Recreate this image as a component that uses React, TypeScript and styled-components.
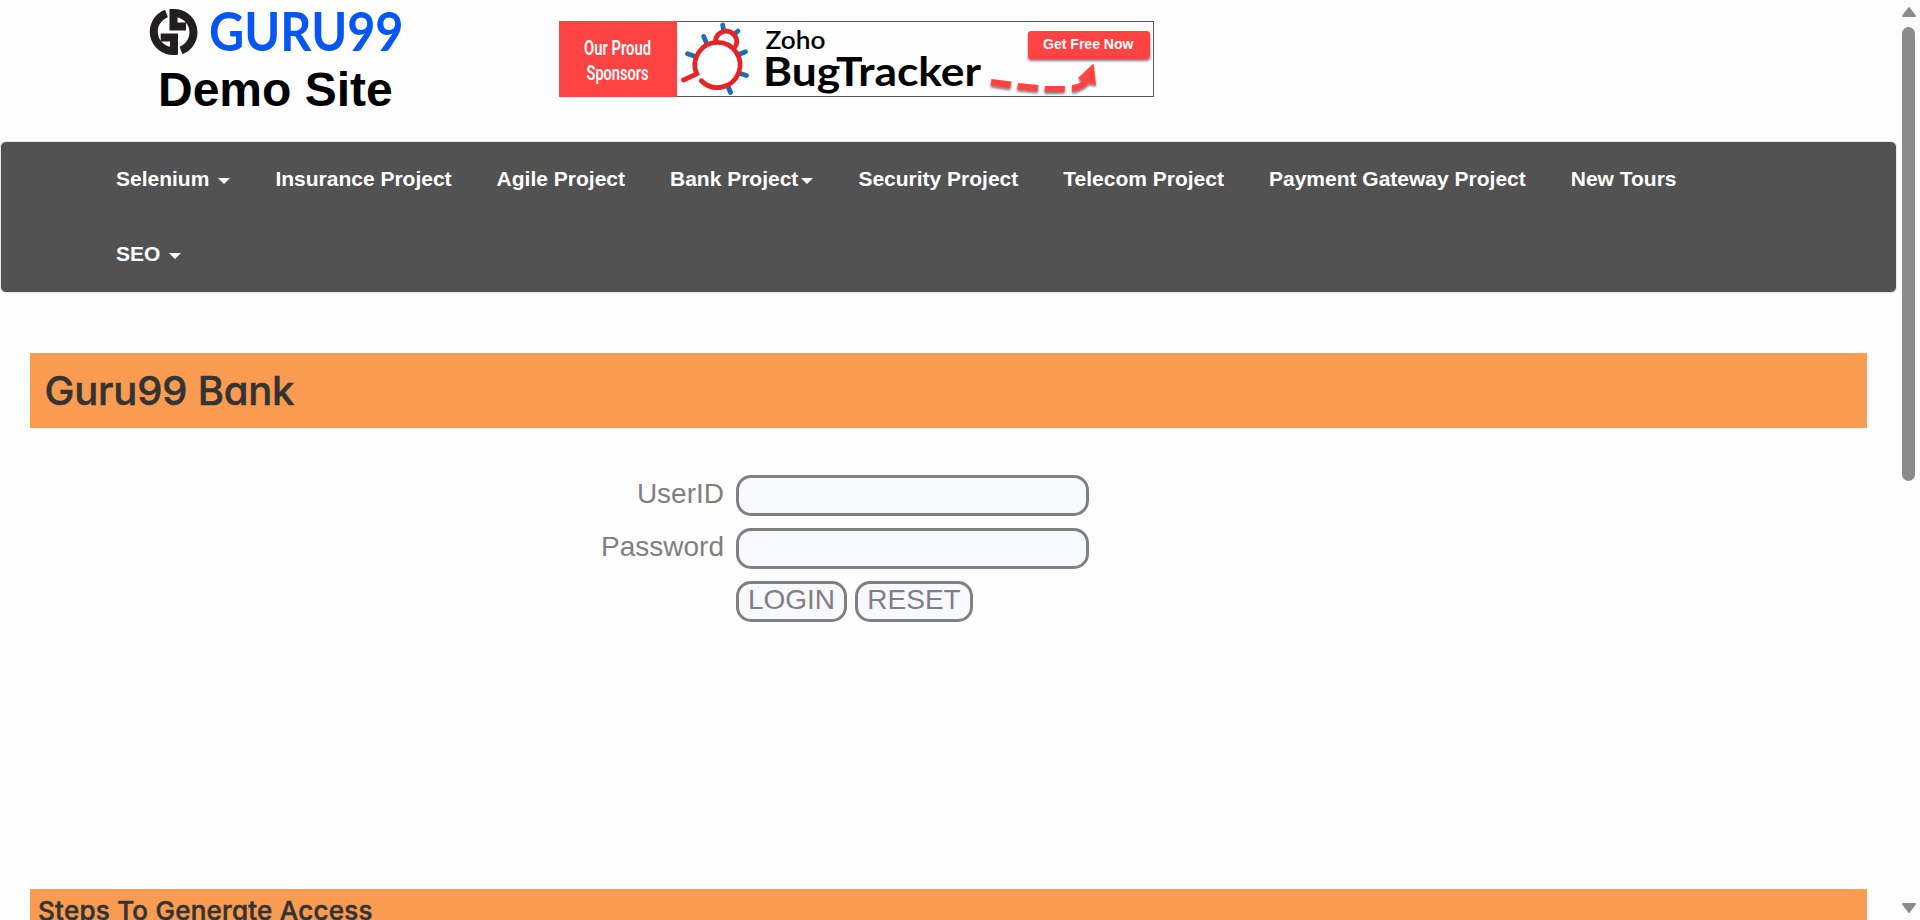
import React from "react";
import styled, { createGlobalStyle } from "styled-components";

const GlobalStyle = createGlobalStyle`
  * { box-sizing: border-box; }
  html, body { margin: 0; background: #fefefe; overflow: hidden; }
  body { font-family: "Liberation Sans", Arial, sans-serif; }
`;

const Screen = styled.div`
  display: flex;
  height: 920px;
  overflow: hidden;
`;

const Page = styled.div`
  flex: 1;
  min-width: 0;
`;

const Header = styled.header`
  display: flex;
  height: 141px;
`;

const Brand = styled.div`
  width: 559px;
  padding-left: 146px;
`;

const BrandName = styled.h1`
  margin: 0 0 0 12px;
  color: #000;
  font-size: 48px;
  line-height: 54px;
  font-weight: 700;
`;

const Drawing = styled.svg`
  display: block;
`;

const Banner = styled.a`
  display: flex;
  width: 595px;
  height: 76px;
  margin-top: 21px;
  background: #fefefe;
`;

const Nav = styled.nav`
  height: 152px;
  border: 1px solid #e7e7e7;
  border-radius: 6px;
  background: #525252;
  padding: 0 92.5px;
`;

const NavList = styled.ul`
  display: flex;
  flex-wrap: wrap;
  width: 1680px;
  margin: 0;
  padding: 0;
  list-style: none;
`;

const NavItem = styled.li<{ $spaced?: boolean }>`
  display: flex;
  align-items: center;
  gap: ${(p) => (p.$spaced ? "9px" : "3px")};
  height: 75px;
  padding: 0 22.5px 2px;
  color: #fff;
  font-size: 21px;
  font-weight: 700;
  white-space: nowrap;
`;

const Caret = styled.span`
  border-top: 6px solid #fff;
  border-left: 6px solid transparent;
  border-right: 6px solid transparent;
  margin-top: 4px;
`;

const Bar = styled.h2<{ $size: number; $line: number; $gap: number; $inset: number; $track: number }>`
  margin: ${(p) => p.$gap}px 30px 0 30px;
  padding-left: ${(p) => p.$inset}px;
  height: 75px;
  background: #f99b51;
  color: #333;
  font-family: Inter, Lato, sans-serif;
  font-feature-settings: "cv11" 1;
  font-weight: 500;
  font-size: ${(p) => p.$size}px;
  line-height: ${(p) => p.$line}px;
  letter-spacing: ${(p) => p.$track}px;
  -webkit-text-stroke: 0.5px #333;
  stroke-linejoin: round;
  white-space: nowrap;
`;

const Form = styled.form`
  display: grid;
  grid-template-columns: 724px auto;
  column-gap: 12px;
  row-gap: 12px;
  margin-top: 47px;
  color: #808080;
  font-size: 28px;
`;

const Label = styled.label`
  text-align: right;
  line-height: 38px;
  height: 41px;
`;

const Field = styled.input`
  width: 353px;
  height: 41px;
  border: 3px solid #808080;
  border-radius: 15px;
  background: #f8f8ff;
`;

const Actions = styled.div`
  grid-column: 2;
  display: flex;
  gap: 8px;
`;

const Action = styled.button<{ $width: number }>`
  width: ${(p) => p.$width}px;
  height: 41px;
  padding: 0 0 4px;
  border: 3px solid #808080;
  border-radius: 15px;
  background: #f8f8ff;
  color: #808080;
  font: 28px/31px "Liberation Sans", Arial, sans-serif;
`;

const ScrollTrack = styled.aside`
  display: flex;
  flex-direction: column;
  align-items: center;
  width: 23px;
  padding: 6px 0;
  background: #fcfcfc;
`;

const ScrollThumb = styled.div`
  width: 13px;
  height: 454px;
  margin: 9px 0 auto;
  border-radius: 7px;
  background: #8b8b8b;
`;

const Arrow = ({ down = false }: { down?: boolean }) => (
  <Drawing width="16" height="12" viewBox="0 0 16 12">
    <path
      d={down ? "M2 2h12L8 10z" : "M2 10h12L8 2z"}
      fill="#8b8b8b"
      stroke="#8b8b8b"
      strokeWidth="2"
      strokeLinejoin="round"
    />
  </Drawing>
);

const Logo = () => (
  <Drawing width="260" height="63" viewBox="146 0 260 63">
    <g fill="none" stroke="#231f20" strokeWidth="8">
      <path d="M166.5 13.4A19.4 19.4 0 0 0 174 51V37.5H160.7" />
      <path d="M181 50.5A19.4 19.4 0 0 0 173.5 13V26.5H186" />
    </g>
    <text x="209" y="50.5" fontFamily="Lato" fontWeight="700" fontSize="53" fill="#0556f3" textLength="194.5" lengthAdjust="spacingAndGlyphs">GURU99</text>
  </Drawing>
);

const SponsorArt = () => (
  <Drawing width="595" height="76" viewBox="559 21 595 76">
    <defs>
      <filter id="shade" x="-20%" y="-20%" width="140%" height="160%">
        <feDropShadow dx="0" dy="2" stdDeviation="1.2" floodColor="#000" floodOpacity="0.5" />
      </filter>
    </defs>
    <rect x="559.5" y="21.5" width="594" height="75" fill="#fefefe" stroke="#58585a" />
    <rect x="559" y="21" width="118" height="76" fill="#ff4343" />
    <g fontFamily="Roboto" fontWeight="600" fontSize="20" fill="#fff">
      <text x="584" y="55" textLength="67" lengthAdjust="spacingAndGlyphs">Our Proud</text>
      <text x="586.5" y="80" textLength="62" lengthAdjust="spacingAndGlyphs">Sponsors</text>
    </g>
    <g fill="none" strokeLinecap="round">
      <path d="M722.7 25l.8 5M738 31l-4 3.500M703.700 36.500l3 7M687.500 53.800l6.500 2.200M745.500 51.700l-6 2.500M746.500 75.500l-6-2M730.500 92.500l-2.500-6" stroke="#1f6db5" strokeWidth="4.8" />
      <path d="M701.300 80.700A22.600 22.600 0 1 0 696.700 73.800L683.500 80M715.500 40.500A10.700 10.700 0 0 1 736.800 41.500Q736.800 45 735 47" stroke="#e42527" strokeWidth="4.800" />
    </g>
    <g fontFamily="Lato" fill="#000">
      <text x="765.5" y="49" fontSize="24" fontWeight="600" textLength="60" lengthAdjust="spacingAndGlyphs">Zoho</text>
      <text x="763" y="86" fontSize="40" fontWeight="700" textLength="218" lengthAdjust="spacingAndGlyphs">BugTracker</text>
    </g>
    <g fill="#ff4343" filter="url(#shade)">
      <rect x="1028" y="31" width="122" height="28" rx="3" />
      <path d="M991.500 79L1011.500 81.500 1010 88.500 990.500 85.500zM1018 83L1038.500 85 1037.500 91.500 1017 89.500zM1045 86L1065 86 1064.500 92 1044.500 92zM1072 85Q1078 84.500 1082 81.500L1078 78 1093.500 63.500 1096 85 1089 83.500Q1082 90.500 1072 92z" />
    </g>
    <text x="1043" y="49" fontFamily="Liberation Sans" fontSize="14" fontWeight="700" fill="#fff" textLength="90.5" lengthAdjust="spacingAndGlyphs">Get Free Now</text>
  </Drawing>
);

type Entry = { label: string; menu?: "spaced" | "tight" };

const entries: Entry[] = [
  { label: "Selenium", menu: "spaced" },
  { label: "Insurance Project" },
  { label: "Agile Project" },
  { label: "Bank Project", menu: "tight" },
  { label: "Security Project" },
  { label: "Telecom Project" },
  { label: "Payment Gateway Project" },
  { label: "New Tours" },
  { label: "SEO", menu: "spaced" },
];

export default function App() {
  return (
    <>
      <GlobalStyle />
      <Screen>
        <Page>
          <Header>
            <Brand>
              <Logo />
              <BrandName>Demo Site</BrandName>
            </Brand>
            <Banner>
              <SponsorArt />
            </Banner>
          </Header>
          <Nav>
            <NavList>
              {entries.map((e) => (
                <NavItem key={e.label} $spaced={e.menu === "spaced"}>
                  {e.label}
                  {e.menu && <Caret />}
                </NavItem>
              ))}
            </NavList>
          </Nav>
          <Bar $size={40} $line={75} $gap={60} $inset={14.5} $track={-0.2}>
            Guru99 Bank
          </Bar>
          <Form>
            <Label htmlFor="uid">UserID</Label>
            <Field id="uid" type="text" />
            <Label htmlFor="pwd">Password</Label>
            <Field id="pwd" type="password" />
            <Actions>
              <Action type="button" $width={111}>LOGIN</Action>
              <Action type="reset" $width={118}>RESET</Action>
            </Actions>
          </Form>
          <Bar as="h3" $size={26} $line={43} $gap={267} $inset={8} $track={0.25}>
            Steps To Generate Access
          </Bar>
        </Page>
        <ScrollTrack>
          <Arrow />
          <ScrollThumb />
          <Arrow down />
        </ScrollTrack>
      </Screen>
    </>
  );
}
